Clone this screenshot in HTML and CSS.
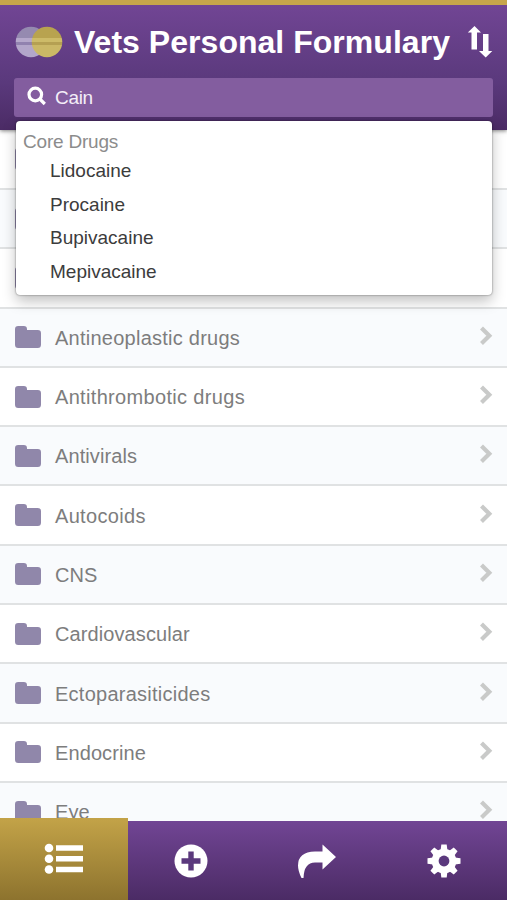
FILE: index.html
```html
<!DOCTYPE html>
<html lang="en">
<head>
<meta charset="utf-8">
<title>Vets Personal Formulary</title>
<link rel="stylesheet" href="styles.css">
</head>
<body>
<svg class="defs" aria-hidden="true">
  <symbol id="folder" viewBox="0 0 26 22"><path d="M0 3.2Q0 0 3.2 0h5.6Q12 0 12 3.2V4h10.800Q26 4 26 7.200v11.300Q26 22 22.800 22H3.200Q0 22 0 18.500z"/></symbol>
  <symbol id="chevron" viewBox="0 0 14 20"><path d="M2.500 2 10.300 9.700 2.500 17.400" fill="none" stroke="currentColor" stroke-width="4.200"/></symbol>
</svg>
<div class="app">
  <header class="header">
    <div class="titlebar">
      <svg class="logo" viewBox="0 0 48 32">
        <defs>
          <clipPath id="left"><circle cx="16" cy="16" r="15.300"/></clipPath>
          <clipPath id="right"><circle cx="32" cy="16" r="15.300"/></clipPath>
        </defs>
        <g clip-path="url(#left)"><path fill="#958ab0" d="M0 0h32v12H0z"/><path fill="#b5a8cb" d="M0 12h32v4H0z"/><path fill="#9182af" d="M0 16h32v3H0z"/><path fill="#b3a6ca" d="M0 19h32v13H0z"/></g>
        <g clip-path="url(#right)"><path fill="#b8a34f" d="M16 0h32v12H16z"/><path fill="#cdbb68" d="M16 12h32v4H16z"/><path fill="#b5a052" d="M16 16h32v3H16z"/><path fill="#cbb866" d="M16 19h32v13H16z"/></g>
      </svg>
      <h1 class="title">Vets Personal Formulary</h1>
      <svg class="sort" viewBox="0 0 26 34"><path fill="#fff" d="M7.500 1 14 7.500H10V24.500H4.500V7.500H.8zM16 9h5.500V26h3.800L18.700 32.500 12 26h4z"/></svg>
    </div>
    <div class="search">
      <svg class="glass" viewBox="0 0 20 20"><circle cx="8.300" cy="8.500" r="6.300"/><path d="m12.800 13 5 5"/></svg>
      <span class="query">Cain</span>
      <div class="dropdown">
        <div class="group">Core Drugs</div>
        <ul class="options"><li>Lidocaine</li><li>Procaine</li><li>Bupivacaine</li><li>Mepivacaine</li></ul>
      </div>
    </div>
  </header>
  <ul class="list">
    <li class="row"><svg class="folder"><use href="#folder"/></svg></li>
    <li class="row"><svg class="folder"><use href="#folder"/></svg></li>
    <li class="row"><svg class="folder"><use href="#folder"/></svg></li>
    <li class="row"><svg class="folder"><use href="#folder"/></svg><span class="name">Antineoplastic drugs</span><svg class="chevron"><use href="#chevron"/></svg></li>
    <li class="row"><svg class="folder"><use href="#folder"/></svg><span class="name wide">Antithrombotic drugs</span><svg class="chevron"><use href="#chevron"/></svg></li>
    <li class="row"><svg class="folder"><use href="#folder"/></svg><span class="name tight">Antivirals</span><svg class="chevron"><use href="#chevron"/></svg></li>
    <li class="row"><svg class="folder"><use href="#folder"/></svg><span class="name wide">Autocoids</span><svg class="chevron"><use href="#chevron"/></svg></li>
    <li class="row"><svg class="folder"><use href="#folder"/></svg><span class="name tight">CNS</span><svg class="chevron"><use href="#chevron"/></svg></li>
    <li class="row"><svg class="folder"><use href="#folder"/></svg><span class="name tight">Cardiovascular</span><svg class="chevron"><use href="#chevron"/></svg></li>
    <li class="row"><svg class="folder"><use href="#folder"/></svg><span class="name">Ectoparasiticides</span><svg class="chevron"><use href="#chevron"/></svg></li>
    <li class="row"><svg class="folder"><use href="#folder"/></svg><span class="name tight">Endocrine</span><svg class="chevron"><use href="#chevron"/></svg></li>
    <li class="row"><svg class="folder"><use href="#folder"/></svg><span class="name tight">Eye</span><svg class="chevron"><use href="#chevron"/></svg></li>
  </ul>
  <nav class="tabs">
    <div class="tab active"><svg width="40" height="32" viewBox="0 0 40 32"><g fill="#fff"><circle cx="5" cy="5" r="4.300"/><circle cx="5" cy="15.800" r="4.300"/><circle cx="5" cy="26.500" r="4.300"/><path d="M12 2.200h27v5.600H12zM12 13h27v5.600H12zM12 23.700h27v5.600H12z"/></g></svg></div>
    <div class="tab"><svg width="34" height="34" viewBox="0 0 34 34"><circle cx="17" cy="17" r="16.500" fill="#fff"/><path d="M17 7.500v19M7.500 17h19" stroke="#5b397d" stroke-width="5.400"/></svg></div>
    <div class="tab"><svg width="40" height="36" viewBox="0 0 40 36"><path fill="#fff" d="M25.500 1.500 39 14 25.500 26.500V19.500H18Q7 19.500 6.500 35H4.500Q1 28 1 22.500 1 9 18 8.500H25.500z"/></svg></div>
    <div class="tab"><svg width="34" height="34" viewBox="0 0 34 34"><g fill="#fff"><path id="tooth" d="M13.600 6 14.300.5h5.400L20.400 6V28L19.700 33.500H14.300L13.600 28z"/><use href="#tooth" transform="rotate(45 17 17)"/><use href="#tooth" transform="rotate(90 17 17)"/><use href="#tooth" transform="rotate(135 17 17)"/><circle cx="17" cy="17" r="12.300"/></g><circle cx="17" cy="17" r="5.400" fill="#5b397d"/></svg></div>
  </nav>
</div>
</body>
</html>
```
FILE: styles.css
```css
* { box-sizing: border-box; }
body { margin: 0; font-family: "Liberation Sans", Arial, sans-serif; background: #fff; }
ul { list-style: none; margin: 0; padding: 0; }
.defs { position: absolute; width: 0; height: 0; }
.app { height: 900px; display: flex; flex-direction: column; overflow: hidden; }
.header {
  position: relative;
  z-index: 2;
  flex: none;
  height: 130px;
  padding: 0 14px;
  border-top: 5px solid #c7a54b;
  background: linear-gradient(#714594, #5a397c 62%, #4b2b65);
  box-shadow: 0 1px 4px rgba(0, 0, 0, .5);
}
.titlebar { display: flex; align-items: center; height: 73px; }
.logo { width: 48px; height: 32px; flex: none; margin: 0 11px 0 1px; }
.title { flex: 1; margin: 0; color: #fff; font-size: 32px; line-height: 40px; font-weight: bold; letter-spacing: .03px; white-space: nowrap; }
.sort { width: 26px; height: 34px; flex: none; }
.search {
  position: relative;
  display: flex;
  align-items: center;
  height: 39px;
  padding-left: 13px;
  border-radius: 3px;
  background: #835d9f;
  color: #f4eef8;
  font-size: 19px;
}
.glass { width: 20px; height: 20px; margin: -3px 8px 0 0; fill: none; stroke: #fff; stroke-width: 3.200; }
.query { letter-spacing: -.3px; padding-top: 1px; }
.dropdown {
  position: absolute;
  top: 43px;
  left: 2px;
  right: 1px;
  height: 174px;
  padding: 9px 7px;
  border-radius: 4px;
  background: #fff;
  color: #3c3c3c;
  box-shadow: 0 0 2px rgba(0, 0, 0, .55), 0 6px 14px rgba(0, 0, 0, .25);
}
.group { height: 24px; line-height: 24px; color: #8c8c8c; letter-spacing: -.2px; }
.options { padding-left: 27px; }
.options li { height: 33.700px; line-height: 34.500px; }
.list { flex: 1; min-height: 0; overflow: hidden; padding-top: .7px; }
.row {
  display: flex;
  align-items: center;
  height: 59.300px;
  padding: 0 14px 0 15px;
  border-bottom: 2px solid #e0e2e3;
  background: #fff;
}
.row:nth-child(even) { background: #f9fbfd; }
.folder { width: 26px; height: 22px; flex: none; fill: #9087aa; }
.name { flex: 1; margin-left: 14px; color: #7d7d7d; font-size: 20px; letter-spacing: .25px; padding-top: 2px; }
.name.wide { letter-spacing: .33px; }
.name.tight { letter-spacing: .1px; }
.chevron { width: 14px; height: 20px; color: #c9cac9; margin-top: -3px; }
.tabs { position: relative; flex: none; display: flex; align-items: flex-end; height: 79.500px; }
.tab {
  flex: 1;
  height: 79.500px;
  padding-top: 1px;
  display: flex;
  align-items: center;
  justify-content: center;
  background: linear-gradient(#714594, #4b2b65);
}
.tab.active { flex: 0 0 128px; height: 82px; padding-top: 0; background: linear-gradient(#c3a348, #8d732e); }
```
